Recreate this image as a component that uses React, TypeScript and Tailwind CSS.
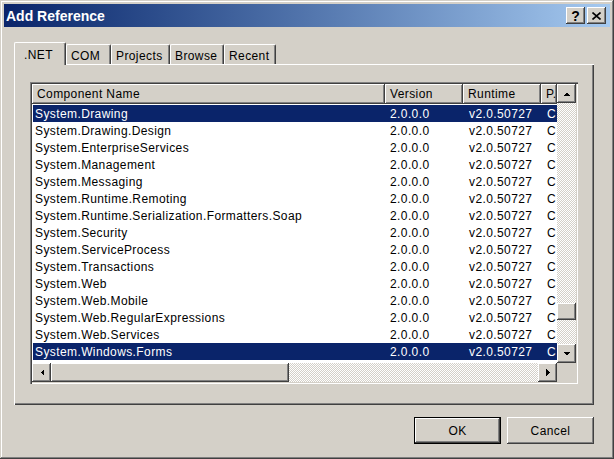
import React from "react";

// ── Data ──────────────────────────────────────────────────────────────────────

const ROWS: { name: string; selected?: boolean }[] = [
  { name: "System.Drawing", selected: true },
  { name: "System.Drawing.Design" },
  { name: "System.EnterpriseServices" },
  { name: "System.Management" },
  { name: "System.Messaging" },
  { name: "System.Runtime.Remoting" },
  { name: "System.Runtime.Serialization.Formatters.Soap" },
  { name: "System.Security" },
  { name: "System.ServiceProcess" },
  { name: "System.Transactions" },
  { name: "System.Web" },
  { name: "System.Web.Mobile" },
  { name: "System.Web.RegularExpressions" },
  { name: "System.Web.Services" },
  { name: "System.Windows.Forms", selected: true },
];

const TABS = [
  { label: ".NET", w: "w-[52px]", active: true },
  { label: "COM", w: "w-[45px]" },
  { label: "Projects", w: "w-[59px]" },
  { label: "Browse", w: "w-[54px]" },
  { label: "Recent", w: "w-[52px]" },
];

// classic 3D raised edge
const RAISED =
  "shadow-[inset_-1px_-1px_#404040,inset_1px_1px_#ffffff,inset_-2px_-2px_#808080]";
const CHECKER =
  "bg-[repeating-conic-gradient(#ffffff_0_25%,#d4d0c8_0_50%)] bg-size-[2px_2px]";

// ── Helpers ───────────────────────────────────────────────────────────────────

function Arrow({ dir }: { dir: "up" | "down" | "left" | "right" }) {
  const pts = {
    up: "0,4 7,4 3.5,0.5",
    down: "0,0 7,0 3.5,3.5",
    left: "4,0 4,7 0.5,3.5",
    right: "0,0 0,7 3.5,3.5",
  }[dir];
  const vert = dir === "up" || dir === "down";
  return (
    <svg
      width={vert ? 7 : 4}
      height={vert ? 4 : 7}
      viewBox={vert ? "0 0 7 4" : "0 0 4 7"}
      shapeRendering="crispEdges"
    >
      <polygon points={pts} fill="#000" />
    </svg>
  );
}

function ScrollButton({
  dir,
  className,
}: {
  dir: "up" | "down" | "left" | "right";
  className: string;
}) {
  return (
    <div
      className={`flex shrink-0 items-center justify-center bg-[#d4d0c8] ${RAISED} ${className}`}
    >
      <Arrow dir={dir} />
    </div>
  );
}

function HeaderCell({ label, w }: { label: string; w: string }) {
  return (
    <div
      className={`flex h-[20px] shrink-0 items-center overflow-hidden whitespace-nowrap bg-[#d4d0c8] pl-[5px] ${RAISED} ${w}`}
    >
      {label}
    </div>
  );
}

// ── Main component ─────────────────────────────────────────────────────────────

export default function App() {
  return (
    <div className="h-[459px] w-[614px] bg-[#d4d0c8] p-[4px] font-['Liberation_Sans',Arial,sans-serif] text-[12px] leading-none tracking-[0.4px] text-black shadow-[inset_-1px_-1px_#404040,inset_1px_1px_#d4d0c8,inset_-2px_-2px_#808080,inset_2px_2px_#ffffff]">
      {/* Title bar */}
      <div className="flex h-[23px] items-center justify-between bg-linear-to-r from-[#0a246a] to-[#a6caf0] pl-[2px] pr-[4px]">
        <span className="text-[14px] font-bold tracking-normal text-white">Add Reference</span>
        <div className="flex gap-[2px]">
          <div
            className={`flex h-[17px] w-[19px] items-center justify-center bg-[#d4d0c8] text-[14px] font-bold tracking-normal ${RAISED}`}
          >
            ?
          </div>
          <div
            className={`flex h-[17px] w-[19px] items-center justify-center bg-[#d4d0c8] ${RAISED}`}
          >
            <svg width="9" height="8" viewBox="0 0 9 8">
              <path d="M0.5 0.5 L8.5 7.5 M8.5 0.5 L0.5 7.5" stroke="#000" strokeWidth="1.6" />
            </svg>
          </div>
        </div>
      </div>

      {/* Tabs */}
      <div className="pl-[10px] pt-[15px]">
        <div className="relative z-10 flex items-end">
          {TABS.map((t) =>
            t.active ? (
              <div
                key={t.label}
                className={`-mb-px flex h-[23px] items-start rounded-t-[2px] border-l border-t border-white bg-[#d4d0c8] pl-[9px] pt-[6px] shadow-[inset_-1px_0_#808080] ${t.w} border-r border-r-[#404040]`}
              >
                {t.label}
              </div>
            ) : (
              <div
                key={t.label}
                className={`flex h-[20px] items-start rounded-t-[2px] border-l border-t border-white bg-[#d4d0c8] pl-[4px] pt-[5px] shadow-[inset_-1px_0_#808080] ${t.w} border-r border-r-[#404040]`}
              >
                {t.label}
              </div>
            ),
          )}
        </div>

        {/* Tab panel */}
        <div className="h-[341px] w-[580px] border-l border-t border-white pl-[15px] pt-[17px] shadow-[inset_-1px_-1px_#404040,inset_-2px_-2px_#808080]">
          {/* List view */}
          <div className="h-[302px] w-[548px] p-[2px] shadow-[inset_1px_1px_#808080,inset_2px_2px_#404040,inset_-1px_-1px_#ffffff,inset_-2px_-2px_#d4d0c8]">
            <div className="flex h-[298px] w-[544px] flex-col bg-white">
              <div className="flex h-[279px]">
                {/* columns + rows */}
                <div className="w-[525px] overflow-hidden">
                  <div className="flex">
                    <HeaderCell label="Component Name" w="w-[353px]" />
                    <HeaderCell label="Version" w="w-[78px]" />
                    <HeaderCell label="Runtime" w="w-[78px]" />
                    <HeaderCell label="P." w="w-[16px]" />
                  </div>
                  <div className="pl-px pt-px">
                    {ROWS.map((r) => (
                      <div
                        key={r.name}
                        className={`flex h-[17px] items-center whitespace-nowrap ${
                          r.selected ? "bg-[#0a246a] text-white" : ""
                        }`}
                      >
                        <div className="w-[352px] pl-[2px]">{r.name}</div>
                        <div className="w-[78px] pl-[5px]">2.0.0.0</div>
                        <div className="w-[78px] pl-[6px]">v2.0.50727</div>
                        <div className="w-[16px] overflow-hidden pl-[6px]">C</div>
                      </div>
                    ))}
                  </div>
                </div>

                {/* vertical scrollbar */}
                <div className={`flex w-[19px] flex-col ${CHECKER}`}>
                  <ScrollButton dir="up" className="h-[19px] w-[19px]" />
                  <div className="h-[200px]" />
                  <div className={`h-[17px] w-[19px] bg-[#d4d0c8] ${RAISED}`} />
                  <div className="flex-1" />
                  <ScrollButton dir="down" className="h-[19px] w-[19px]" />
                </div>
              </div>

              {/* horizontal scrollbar */}
              <div className="flex h-[19px]">
                <div className={`flex w-[525px] ${CHECKER}`}>
                  <ScrollButton dir="left" className="h-[19px] w-[19px]" />
                  <div className={`h-[19px] w-[238px] bg-[#d4d0c8] ${RAISED}`} />
                  <div className="flex-1" />
                  <ScrollButton dir="right" className="h-[19px] w-[19px]" />
                </div>
                <div className="w-[19px] bg-[#d4d0c8]" />
              </div>
            </div>
          </div>
        </div>

        {/* Dialog buttons */}
        <div className="flex w-[580px] justify-end gap-[6px] pt-[12px]">
          <button
            type="button"
            className="flex h-[27px] w-[87px] items-center justify-center border border-black bg-[#d4d0c8] shadow-[inset_-1px_-1px_#404040,inset_1px_1px_#ffffff,inset_-2px_-2px_#808080]"
          >
            OK
          </button>
          <button
            type="button"
            className={`flex h-[27px] w-[87px] items-center justify-center bg-[#d4d0c8] ${RAISED}`}
          >
            Cancel
          </button>
        </div>
      </div>
    </div>
  );
}
